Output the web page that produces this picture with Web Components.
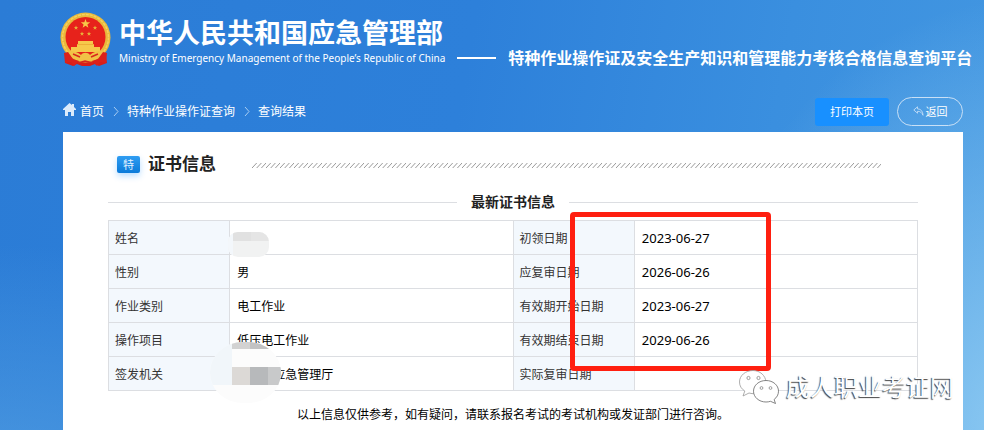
<!DOCTYPE html>
<html lang="zh-CN">
<head>
<meta charset="utf-8">
<meta name="viewport" content="width=device-width, initial-scale=1">
<title>特种作业操作证查询</title>
<style>
    html {
        min-height: 100%;
        background:
            radial-gradient(ellipse 340px 440px at 104% 100%, rgba(150, 208, 244, 0.9), rgba(150, 208, 244, 0)),
            radial-gradient(ellipse 460px 260px at 0% 115%, rgba(90, 165, 228, 0.7), rgba(90, 165, 228, 0)),
            linear-gradient(100deg, #2b7cd6 0%, #2d80da 45%, #3a8fdf 75%, #4397e1 100%);
    }

    body {
        margin: 0;
        color: #000;
        font: 12px/18px "Noto Sans", "Noto Sans CJK SC", sans-serif;
        overflow: hidden;
    }
</style>
</head>
<body>
<query-page>
    <ministry-header slot="header">
        <span slot="name">中华人民共和国应急管理部</span>
        <span slot="english">Ministry of Emergency Management of the People’s Republic of China</span>
        <span slot="platform">特种作业操作证及安全生产知识和管理能力考核合格信息查询平台</span>
    </ministry-header>
    <crumb-trail slot="toolbar"></crumb-trail>
    <action-button slot="actions">打印本页</action-button>
    <action-button slot="actions" back>返回</action-button>
    <section-heading mark="特">证书信息</section-heading>
    <divider-title>最新证书信息</divider-title>
    <certificate-table></certificate-table>
    <foot-note>以上信息仅供参考，如有疑问，请联系报名考试的考试机构或发证部门进行咨询。</foot-note>
</query-page>
<account-watermark>成人职业考证网</account-watermark>

<script>
function define(name, html, setup) {
    const template = document.createElement('template');
    template.innerHTML = html;

    window.customElements.define(name, class extends HTMLElement {
        constructor() {
            super();
            this.attachShadow({mode: 'open'}).appendChild(template.content.cloneNode(true));
        }

        connectedCallback() {
            if (setup) {
                setup(this, this.shadowRoot);
            }
        }
    });
}

define('query-page', `
    <style>
        :host {
            display: block;
            padding: 12px 21px 0 63px;
        }

        .toolbar {
            display: flex;
            justify-content: space-between;
            align-items: center;
            margin: 30px 0 6px;
        }

        .actions {
            display: flex;
            align-items: center;
            gap: 8px;
        }

        main {
            min-height: 280px;
            padding: 20px 45px 0;
            background: #fff;
        }
    </style>
    <slot name="header"></slot>
    <div class="toolbar">
        <slot name="toolbar"></slot>
        <div class="actions"><slot name="actions"></slot></div>
    </div>
    <main><slot></slot></main>
`);

define('ministry-header', `
    <style>
        :host {
            display: flex;
            align-items: flex-end;
            height: 55px;
            margin: 0 -8px 0 -3px;
            color: #fff;
            white-space: nowrap;
        }

        svg {
            flex: none;
            width: 51px;
            height: 55px;
            margin-right: 8px;
        }

        h1, p {
            margin: 0;
        }

        h1 {
            font-size: 27px;
            line-height: 32px;
        }

        .english {
            font-size: 10px;
            line-height: 18px;
        }

        .rule {
            flex: none;
            width: 39px;
            height: 2px;
            margin: 0 12px 8px;
            background: #fff;
        }

        .platform {
            font-size: 16px;
            font-weight: bold;
            line-height: 18px;
        }
    </style>
    <svg viewBox="0 0 51 55" aria-hidden="true">
        <path d="M7 38L5 51l8 3 4-2 5 2h8l5-2 4 2 8-3-2-13z" fill="#d81e18"/>
        <circle cx="25.500" cy="25.500" r="25" fill="#e9b93c"/>
        <circle cx="25.500" cy="25.500" r="23" fill="none" stroke="#f6d05c" stroke-width="1.500" stroke-dasharray="3 1"/>
        <circle cx="25.500" cy="25" r="20" fill="#e7221b"/>
        <path d="M25.500 7l1.200 3.200 3.500.1-2.800 2.100 1 3.400-2.900-2-2.900 2 1-3.400-2.800-2.100 3.500-.1z" fill="#f7c948"/>
        <g fill="#e8b03a">
            <path id="s" d="M16 13.500l.6 1.500 1.600.1-1.300 1 .5 1.600-1.400-.9-1.400.9.500-1.600-1.300-1 1.600-.1z"/>
            <use href="#s" x="19"/><use href="#s" x="6" y="6"/><use href="#s" x="13" y="6"/>
        </g>
        <path d="M18 29h15v3h1v3h6v5H11v-5h6v-3h1z" fill="#f6c84b"/>
        <path d="M17 32.500h17" stroke="#eba633" stroke-width=".8"/>
        <path d="M7 38c5 1 11 2 14 5 2-3 7-3 9 0 3-3 9-4 14-5-3 6-7 9-12 10-3 2-10 2-13 0-5-1-9-4-12-10z" fill="#f1c246"/>
        <path d="M4 41l1 10 6-1 3 4 5-5-6-2-5-7zM47 41l-1 10-6-1-3 4-5-5 6-2 5-7z" fill="#dc211b"/>
        <path d="M13 42l7 3M38 42l-7 3M18 51l7-2 8 2" stroke="#d7271c" stroke-width="1.500" fill="none"/>
    </svg>
    <div>
        <h1><slot name="name"></slot></h1>
        <p class="english"><slot name="english"></slot></p>
    </div>
    <span class="rule"></span>
    <p class="platform"><slot name="platform"></slot></p>
`);

define('crumb-trail', `
    <style>
        :host {
            display: block;
        }

        nav {
            display: flex;
            align-items: center;
        }

        a {
            color: #fff;
            text-decoration: none;
        }

        .home {
            width: 13px;
            height: 13px;
            margin: 0 4px 4px 0;
        }

        .arrow {
            width: 6px;
            height: 9px;
            margin: 0 8px 0 9px;
        }
    </style>
    <nav aria-label="面包屑">
        <svg class="home" viewBox="0 0 13 13" aria-hidden="true"><path d="M6.500 0L0 6v1h2v6h3V9h3v4h3V7h2V6l-2-2V1H9v1z" fill="#dcebfb"/></svg>
        <a href="#home">首页</a>
        <svg class="arrow" viewBox="0 0 6 9" aria-hidden="true"><path d="M1 0l4 4.500L1 9" fill="none" stroke="#a9cdf2"/></svg>
        <a href="#query">特种作业操作证查询</a>
        <svg class="arrow" viewBox="0 0 6 9" aria-hidden="true"><path d="M1 0l4 4.500L1 9" fill="none" stroke="#a9cdf2"/></svg>
        <a href="#result">查询结果</a>
    </nav>
`);

define('action-button', `
    <style>
        :host {
            display: block;
        }

        button {
            display: flex;
            align-items: center;
            justify-content: center;
            gap: 2px;
            box-sizing: border-box;
            width: 74px;
            height: 28px;
            padding: 0;
            border: none;
            border-radius: 3px;
            background: #1890ff;
            color: #fff;
            font: inherit;
            font-size: 11px;
            cursor: pointer;
        }

        svg {
            display: none;
            width: 11px;
            height: 10px;
            margin-bottom: 2px;
        }

        :host([back]) button {
            width: 66px;
            height: 29px;
            border: 1px solid #c9e0f6;
            border-radius: 15px;
            background: none;
        }

        :host([back]) svg {
            display: block;
        }
    </style>
    <button type="button">
        <svg viewBox="0 0 11 10" aria-hidden="true"><path d="M4.500.8L.8 4l3.700 3.200V5.300C7 5.200 8.800 6.500 10 9.300 10 5.500 8 3 4.500 2.800z" fill="none" stroke="#c4def6" stroke-width=".9" stroke-linejoin="round"/></svg>
        <slot></slot>
    </button>
`);

define('section-heading', `
    <style>
        :host {
            display: flex;
            align-items: center;
            padding: 0 37px 0 9px;
        }

        .mark {
            width: 23px;
            margin-right: 8px;
            border-radius: 2px;
            background: linear-gradient(#2f9df2, #0a7ad9);
            box-shadow: 0 3px 6px rgba(24, 144, 255, 0.3);
            color: #e6f3ff;
            font-size: 11px;
            line-height: 17px;
            text-align: center;
        }

        h2 {
            margin: 0;
            color: #222;
            font-size: 17px;
            line-height: 24px;
        }

        .hatch {
            flex: 1;
            height: 5px;
            min-width: 0;
            margin: 3px 0 0 36px;
        }
    </style>
    <span class="mark"></span>
    <h2><slot></slot></h2>
    <svg class="hatch" aria-hidden="true">
        <defs>
            <pattern id="hatch" width="14" height="5" patternUnits="userSpaceOnUse">
                <path d="M0 5L4.700 0M4.700 5L9.400 0M9.400 5L14 0" stroke="#999" stroke-width="1"/>
            </pattern>
        </defs>
        <rect width="100%" height="5" fill="url(#hatch)"/>
    </svg>
`, (host, root) => {
    root.querySelector('.mark').textContent = host.getAttribute('mark');
});

define('divider-title', `
    <style>
        :host {
            display: flex;
            align-items: center;
            gap: 14px;
            margin: 16px 0 8px;
        }

        :host::before, :host::after {
            content: "";
            flex: 1;
            height: 1px;
            background: #dcdee2;
        }

        h3 {
            margin: 0;
            color: #222;
            font-size: 14px;
            line-height: 20px;
        }
    </style>
    <h3><slot></slot></h3>
`);

define('certificate-table', `
    <style>
        :host {
            display: block;
            position: relative;
        }

        table {
            width: 100%;
            table-layout: fixed;
            border-collapse: collapse;
        }

        th, td {
            box-sizing: border-box;
            height: 34px;
            padding: 2px 7px 0;
            border: 1px solid #dcdee2;
            text-align: left;
            font-weight: normal;
        }

        th {
            width: 15%;
            padding-left: 6px;
            background: #f3f8fd;
            color: #333;
        }

        td {
            position: relative;
        }

        .date {
            padding-top: 0;
            font-size: 13px;
        }

        .issuer {
            padding-left: 43px;
        }

        .mask {
            position: absolute;
            left: -2px;
            top: 11px;
            width: 42px;
            height: 25px;
        }

        .issuer .mask {
            left: -20px;
            top: -15px;
            width: 71px;
            height: 61px;
        }

        .highlight {
            position: absolute;
            left: 57%;
            top: -8px;
            box-sizing: border-box;
            width: 201px;
            height: 159px;
            border: 5px solid #ff1f10;
            border-radius: 4px;
        }
    </style>
    <table>
        <tr>
            <th scope="row">姓名</th>
            <td><svg class="mask" viewBox="0 0 42 25" aria-hidden="true">
                <clipPath id="name"><rect width="41" height="25" rx="10"/></clipPath>
                <g clip-path="url(#name)">
                    <path d="M0 0h42v25H0z" fill="#f1f2f2"/>
                    <path d="M5 0h18v9H5z" fill="#e1e1e1"/>
                    <path d="M23 0h19v9H23z" fill="#e5e5e5"/>
                    <path d="M0 0h5v25H0z" fill="#f3f7fb"/>
                </g>
            </svg></td>
            <th scope="row">初领日期</th>
            <td class="date">2023-06-27</td>
        </tr>
        <tr>
            <th scope="row">性别</th>
            <td>男</td>
            <th scope="row">应复审日期</th>
            <td class="date">2026-06-26</td>
        </tr>
        <tr>
            <th scope="row">作业类别</th>
            <td>电工作业</td>
            <th scope="row">有效期开始日期</th>
            <td class="date">2023-06-27</td>
        </tr>
        <tr>
            <th scope="row">操作项目</th>
            <td>低压电工作业</td>
            <th scope="row">有效期结束日期</th>
            <td class="date">2029-06-26</td>
        </tr>
        <tr>
            <th scope="row">签发机关</th>
            <td class="issuer">应急管理厅<svg class="mask" viewBox="0 0 71 61" aria-hidden="true">
                <clipPath id="issuer"><rect width="71" height="61" rx="33" ry="30"/></clipPath>
                <g clip-path="url(#issuer)">
                    <path d="M0 0h71v61H0z" fill="#fcfcfc"/>
                    <path d="M0 0h22v43H0z" fill="#f1f6fa"/>
                    <path d="M22 0h18v7H22z" fill="#d2d2d2"/>
                    <path d="M40 0h31v7H40z" fill="#c2c2c3"/>
                    <path d="M22 25h18v18H22z" fill="#dcd9d6"/>
                    <path d="M40 25h18v18H40z" fill="#b7b9bb"/>
                    <path d="M58 25h13v18H58z" fill="#c8c9ca"/>
                </g>
            </svg></td>
            <th scope="row">实际复审日期</th>
            <td></td>
        </tr>
    </table>
    <div class="highlight"></div>
`);

define('foot-note', `
    <style>
        :host {
            display: block;
            padding: 15px 0;
            text-align: center;
        }
    </style>
    <slot></slot>
`);

define('account-watermark', `
    <style>
        :host {
            position: absolute;
            right: 30px;
            bottom: 26px;
            display: flex;
            align-items: center;
            gap: 7px;
            color: #fff;
            font-size: 24px;
            line-height: 34px;
            text-shadow: -1px 1px 1px #444;
        }

        svg {
            width: 40px;
            height: 34px;
        }
    </style>
    <svg viewBox="0 0 40 34" aria-hidden="true">
        <g fill="#fff" stroke="#999" stroke-width=".8">
            <path d="M14 .5C6.500.5.500 5.500.500 12c0 4 2 7 5.300 9L4 26l6-3c2 .6 4 .8 6 .6L27 12C26.500 5.500 21 .5 14 .5z"/>
            <path stroke="#666" d="M27 10.500c-7 0-12.500 4.700-12.500 10.700S20 32 27 32c1.700 0 3-.2 4.500-.7l5 2.200-1.400-4C37.800 27.500 39.500 24.600 39.500 21.200c0-6-5.500-10.700-12.500-10.700z"/>
        </g>
        <g fill="#fff" stroke="#888" stroke-width=".8">
            <circle cx="9.500" cy="8" r="1.600"/><circle cx="19.500" cy="8" r="1.600"/>
            <circle cx="22.500" cy="18" r="1.400"/><circle cx="31.500" cy="18" r="1.400"/>
        </g>
    </svg>
    <span><slot></slot></span>
`);
</script>
</body>
</html>
